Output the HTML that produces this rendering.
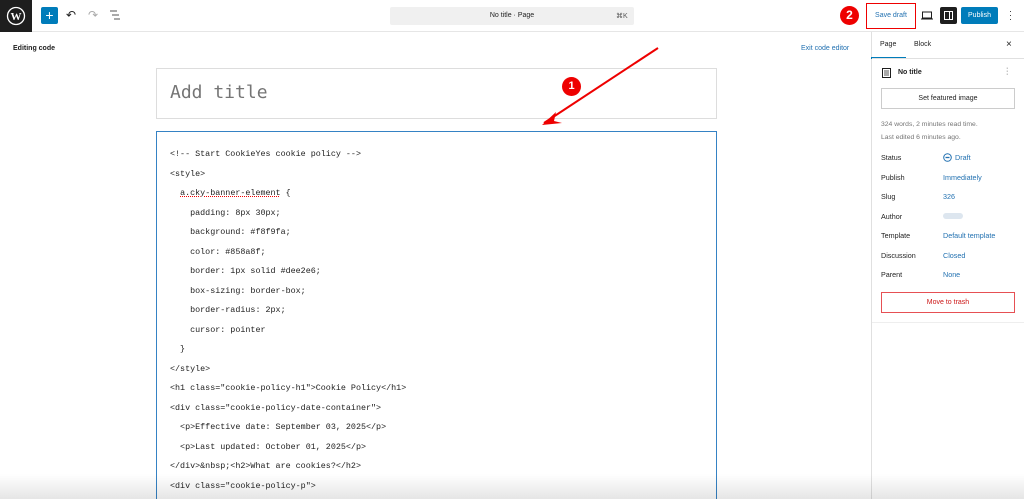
<!DOCTYPE html>
<html style="overflow:hidden;height:499px"><head><meta charset="utf-8"><style>
*{margin:0;padding:0;box-sizing:border-box}
body{width:1024px;height:499px;overflow:hidden;background:#fff;font-family:"Liberation Sans",sans-serif;position:relative}
.abs{position:absolute}
.hdr{left:0;top:0;width:1024px;height:32px;border-bottom:1px solid #e6e6e6}
.wp{left:0;top:0;width:32px;height:32px;background:#1e1e1e}
.side{left:871px;top:32px;width:153px;height:467px;border-left:1px solid #e0e0e0}
.code{left:156px;top:131px;width:561px;height:368px;border:1.5px solid #3582c4;border-bottom:none}
.line{position:absolute;left:13px;font-family:"Liberation Mono",monospace;font-size:8.4px;color:#1e1e1e;white-space:pre}
.lbl{position:absolute;left:881px;font-size:7.2px;color:#1e1e1e}
.val{position:absolute;left:943px;font-size:7.2px;color:#2271b1}
</style></head><body>
<div class="abs hdr"></div>
<div class="abs wp"><svg width="32" height="32" viewBox="0 0 32 32"><circle cx="16" cy="16" r="8.5" fill="none" stroke="#fff" stroke-width="1.3"/><text x="16" y="20" font-size="11" font-family="Liberation Serif" font-weight="bold" fill="#fff" text-anchor="middle">W</text></svg></div>
<div class="abs" style="left:41px;top:7px;width:17px;height:17px;background:#007cba;border-radius:2px;color:#fff;font-size:14px;line-height:16px;text-align:center">+</div>
<div class="abs" style="left:66px;top:8px;font-size:12px;color:#1e1e1e">↶</div>
<div class="abs" style="left:88px;top:8px;font-size:12px;color:#aaa">↷</div>
<svg class="abs" style="left:109px;top:10px" width="12" height="10"><path d="M1 1h7M3 5h7M5 9h6" stroke="#555" stroke-width="1"/></svg>
<div class="abs" style="left:390px;top:7px;width:244px;height:18px;background:#f0f0f0;border-radius:2px;font-size:7px;color:#1e1e1e;line-height:18px;text-align:center">No title · Page</div>
<div class="abs" style="left:616px;top:12px;font-size:7px;color:#555">⌘K</div>
<div class="abs" style="left:840px;top:6px;width:19px;height:19px;border-radius:50%;background:#e00;color:#fff;font-weight:bold;font-size:12px;text-align:center;line-height:19px">2</div>
<div class="abs" style="left:866px;top:3px;width:50px;height:26px;border:1.5px solid #e00;font-size:7px;color:#2271b1;text-align:center;line-height:23px">Save draft</div>
<svg class="abs" style="left:921px;top:11px" width="12" height="9"><rect x="1.5" y="1" width="9" height="6" fill="none" stroke="#1e1e1e"/><path d="M0 8h12" stroke="#1e1e1e"/></svg>
<div class="abs" style="left:940px;top:7px;width:17px;height:17px;background:#1e1e1e;border-radius:2px"><div style="margin:4px;width:9px;height:9px;border:1px solid #fff;position:relative"><div style="position:absolute;right:2px;top:0;width:1px;height:7px;background:#fff"></div></div></div>
<div class="abs" style="left:961px;top:7px;width:37px;height:17px;background:#007cba;border-radius:2px;color:#fff;font-size:7px;text-align:center;line-height:17px">Publish</div>
<div class="abs" style="left:1009px;top:9px;font-size:9px;color:#1e1e1e;line-height:4px">·<br>·<br>·</div>

<div class="abs" style="left:13px;top:45px;font-size:7px;color:#1e1e1e;font-weight:bold">Editing code</div>
<div class="abs" style="left:801px;top:45px;font-size:7px;color:#2271b1">Exit code editor</div>
<div class="abs" style="left:156px;top:68px;width:561px;height:51px;border:1px solid #ddd"></div>
<div class="abs" style="left:170px;top:82px;font-family:'DejaVu Sans Mono',monospace;font-size:18px;color:#757575">Add title</div>
<div class="abs code">
<div class="line" style="top:17px">&lt;!-- Start CookieYes cookie policy --&gt;</div>
<div class="line" style="top:36.5px">&lt;style&gt;</div>
<div class="line" style="top:56px">  <span style="text-decoration:underline dotted #e00">a.cky-banner-element</span> {</div>
<div class="line" style="top:75.5px">    padding: 8px 30px;</div>
<div class="line" style="top:95px">    background: #f8f9fa;</div>
<div class="line" style="top:114.5px">    color: #858a8f;</div>
<div class="line" style="top:134px">    border: 1px solid #dee2e6;</div>
<div class="line" style="top:153.5px">    box-sizing: border-box;</div>
<div class="line" style="top:173px">    border-radius: 2px;</div>
<div class="line" style="top:192.5px">    cursor: pointer</div>
<div class="line" style="top:212px">  }</div>
<div class="line" style="top:231.5px">&lt;/style&gt;</div>
<div class="line" style="top:251px">&lt;h1 class="cookie-policy-h1"&gt;Cookie Policy&lt;/h1&gt;</div>
<div class="line" style="top:270.5px">&lt;div class="cookie-policy-date-container"&gt;</div>
<div class="line" style="top:290px">  &lt;p&gt;Effective date: September 03, 2025&lt;/p&gt;</div>
<div class="line" style="top:309.5px">  &lt;p&gt;Last updated: October 01, 2025&lt;/p&gt;</div>
<div class="line" style="top:329px">&lt;/div&gt;&amp;nbsp;&lt;h2&gt;What are cookies?&lt;/h2&gt;</div>
<div class="line" style="top:348.5px">&lt;div class="cookie-policy-p"&gt;</div>
</div>
<svg class="abs" style="left:530px;top:40px" width="140" height="100"><path d="M128 8 L14 83" stroke="#e00" stroke-width="2"/><path d="M12 85 L26 72 L24 81 L32 83 Z" fill="#e00"/></svg>
<div class="abs" style="left:562px;top:77px;width:19px;height:19px;border-radius:50%;background:#e00;color:#fff;font-weight:bold;font-size:11px;text-align:center;line-height:19px">1</div>

<div class="abs side"></div>
<div class="abs" style="left:880px;top:41px;font-size:7px;color:#1e1e1e">Page</div>
<div class="abs" style="left:871px;top:57px;width:35px;height:1.5px;background:#007cba"></div>
<div class="abs" style="left:914px;top:41px;font-size:7px;color:#1e1e1e">Block</div>
<div class="abs" style="left:1006px;top:39px;font-size:10px;color:#1e1e1e">×</div>
<div class="abs" style="left:872px;top:58px;width:152px;border-top:1px solid #e0e0e0"></div>
<svg class="abs" style="left:882px;top:68px" width="9" height="10"><rect x="0.5" y="0.5" width="8" height="9" fill="none" stroke="#1e1e1e"/><path d="M2 3h5M2 5h5M2 7h5" stroke="#1e1e1e" stroke-width=".7"/></svg>
<div class="abs" style="left:898px;top:69px;font-size:7px;color:#1e1e1e;font-weight:bold">No title</div>
<div class="abs" style="left:1006px;top:67px;font-size:7px;line-height:3px;color:#1e1e1e">·<br>·<br>·</div>
<div class="abs" style="left:881px;top:88px;width:134px;height:21px;border:1px solid #ccc;font-size:7px;color:#1e1e1e;text-align:center;line-height:19px">Set featured image</div>
<div class="abs" style="left:881px;top:118px;font-size:6.8px;color:#757575;line-height:13px">324 words, 2 minutes read time.<br>Last edited 6 minutes ago.</div>
<div class="lbl" style="top:153px">Status</div>
<svg class="abs" style="left:943px;top:153px" width="9" height="9"><circle cx="4.5" cy="4.5" r="3.8" fill="none" stroke="#2271b1" stroke-width="1"/><path d="M2.5 4.5h4" stroke="#2271b1" stroke-width="1.3"/></svg>
<div class="val" style="top:153px;left:955px">Draft</div>
<div class="lbl" style="top:173px">Publish</div><div class="val" style="top:173px">Immediately</div>
<div class="lbl" style="top:192px">Slug</div><div class="val" style="top:192px">326</div>
<div class="lbl" style="top:212px">Author</div><div class="abs" style="left:943px;top:213px;width:20px;height:6px;background:#dde6ef;border-radius:3px"></div>
<div class="lbl" style="top:231px">Template</div><div class="val" style="top:231px">Default template</div>
<div class="lbl" style="top:251px">Discussion</div><div class="val" style="top:251px">Closed</div>
<div class="lbl" style="top:270px">Parent</div><div class="val" style="top:270px">None</div>
<div class="abs" style="left:881px;top:292px;width:134px;height:21px;border:1px solid #e65054;font-size:7px;color:#cc1818;text-align:center;line-height:19px">Move to trash</div>
<div class="abs" style="left:872px;top:322px;width:152px;border-top:1px solid #eee"></div>
<div class="abs" style="left:0;top:474px;width:1024px;height:25px;background:linear-gradient(rgba(0,0,0,0),rgba(0,0,0,.1));pointer-events:none"></div>
</body></html>
